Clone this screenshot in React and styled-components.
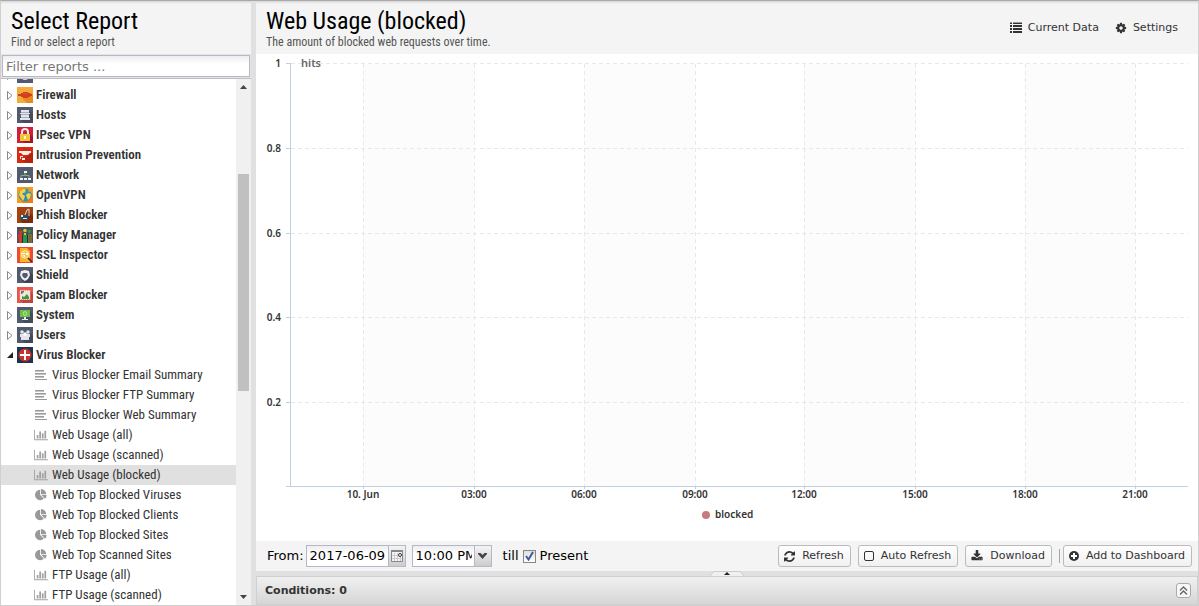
import React, { useLayoutEffect, useRef, useState } from 'react';
import styled, { createGlobalStyle } from 'styled-components';

const condensed = '"Roboto Condensed", Roboto, sans-serif';
const sans = '"DejaVu Sans", Verdana, sans-serif';

const apps = [
  { id: 'events', label: 'Events' },
  { id: 'firewall', label: 'Firewall' },
  { id: 'hosts', label: 'Hosts' },
  { id: 'ipsec', label: 'IPsec VPN' },
  { id: 'intrusion', label: 'Intrusion Prevention' },
  { id: 'network', label: 'Network' },
  { id: 'openvpn', label: 'OpenVPN' },
  { id: 'phish', label: 'Phish Blocker' },
  { id: 'policy', label: 'Policy Manager' },
  { id: 'ssl', label: 'SSL Inspector' },
  { id: 'shield', label: 'Shield' },
  { id: 'spam', label: 'Spam Blocker' },
  { id: 'system', label: 'System' },
  { id: 'users', label: 'Users' },
  {
    id: 'virus',
    label: 'Virus Blocker',
    reports: [
      { type: 'text', label: 'Virus Blocker Email Summary' },
      { type: 'text', label: 'Virus Blocker FTP Summary' },
      { type: 'text', label: 'Virus Blocker Web Summary' },
      { type: 'bar', label: 'Web Usage (all)' },
      { type: 'bar', label: 'Web Usage (scanned)' },
      { type: 'bar', label: 'Web Usage (blocked)' },
      { type: 'pie', label: 'Web Top Blocked Viruses' },
      { type: 'pie', label: 'Web Top Blocked Clients' },
      { type: 'pie', label: 'Web Top Blocked Sites' },
      { type: 'pie', label: 'Web Top Scanned Sites' },
      { type: 'bar', label: 'FTP Usage (all)' },
      { type: 'bar', label: 'FTP Usage (scanned)' },
    ],
  },
];

const slate = '#525a6e';

const appIcons = {
  events: (
    <>
      <path fill={slate} d="M0 0h16v16H0z" />
      <circle cx="8" cy="8" r="5" fill="#dfe2e8" />
    </>
  ),
  firewall: (
    <>
      <path fill="#f3ab3b" d="M0 0h16v16H0z" />
      <path fill="#e88a22" d="M5 11l8-6 3 3v8H10z" />
      <path fill="#d0401f" d="M1 7h3V6h2V5h5v1h2v1h2v2h-2v1h-2v1H6v-1H4V9H1z" />
      <path fill="#e0562c" d="M6 6h4v1H6z" />
    </>
  ),
  hosts: (
    <>
      <path fill={slate} d="M0 0h16v16H0z" />
      <path fill="#444b5c" d="M13 4l3 3v9H7l-3-3z" />
      <path fill="#aab0bb" d="M4 3h8v10H4z" />
      <path fill="#e2e5ea" d="M4 3h8v2H4zM3 6h10v1H3zM4 8h8v2H4zM3 11h10v2H3z" />
    </>
  ),
  ipsec: (
    <>
      <path fill="#cf1f3c" d="M0 0h16v16H0z" />
      <path fill="#a2152c" d="M12 6l4 4v6H8l-4-3z" />
      <path fill="none" stroke="#f3e9e4" strokeWidth="2" d="M5 8V5a3 3 0 0 1 6 0v3" />
      <path fill="#f0c63c" d="M3 7h10v7H3z" />
      <path fill="#fff3c4" d="M7 9h2v3H7z" />
    </>
  ),
  intrusion: (
    <>
      <path fill="#d92a10" d="M0 0h16v16H0z" />
      <path fill="#b8230d" d="M14 5l2 2v9H9l-4-3z" />
      <path fill="#f4ecea" d="M2 4h12v2H2zM4 6h9l-2 2H6zM3 9h3v1H3zM3 10h1v2H3zM5 11h3v2H5z" />
    </>
  ),
  network: (
    <>
      <path fill={slate} d="M0 0h16v16H0z" />
      <path fill="none" stroke="#7fae84" d="M8 5v4M4 11V8.500h8V11" />
      <path fill="#f1f3f5" d="M7 4h3v2H7zM3 11h3v2H3zM7 11h3v2H7zM11 11h3v2h-3z" />
    </>
  ),
  openvpn: (
    <>
      <path fill="#f79a1d" d="M0 0h16v16H0z" />
      <path fill="#ef7d13" d="M12 4l4 4v8H6l-2-3z" />
      <circle cx="8" cy="8" r="6.500" fill="#3590b8" />
      <path fill="#f8d23c" d="M3 4l3-2 3 0-1 2 1 1-3 1-1 1 3 2-1 3-1 2-2-3-2-3zM9 8l2-2 3 1-1 4-2 2-1-3zM11 3l2 1-1 1z" />
    </>
  ),
  phish: (
    <>
      <path fill="#a5400f" d="M0 0h16v16H0z" />
      <path fill="#7c2c08" d="M12 5l4 4v7H6l-3-3z" />
      <path fill="#2d4c6b" d="M3 8h8v5H4z" />
      <path fill="#e9edf1" d="M4 8h2v2H4zM6 11h4v1H6z" />
      <path fill="none" stroke="#d5dbe2" d="M8 8l2-5 2-1v7" />
    </>
  ),
  policy: (
    <>
      <path fill="#4a4f5c" d="M0 0h16v16H0z" />
      <circle cx="3.500" cy="5" r="1.800" fill="#d23a2b" />
      <circle cx="8" cy="3.500" r="1.800" fill="#e7c32f" />
      <circle cx="12.500" cy="4.500" r="1.800" fill="#24984b" />
      <path fill="#d23a2b" d="M1 7h4v9H2z" />
      <path fill="#e7c32f" d="M7 6h2v3H7z" />
      <path fill="#1f9a4a" d="M6 8h4v8H6zM11 7h1v9h-1zM14 7h1v9h-1z" />
      <path fill="#d23a2b" d="M12 7h2v9h-2z" />
      <path fill="#2b2f38" d="M5 8h1v8H5zM10 8h1v8h-1z" />
    </>
  ),
  ssl: (
    <>
      <path fill="#ee4b32" d="M0 0h16v16H0z" />
      <path fill="#f5b32e" d="M3 1h7l3 3v11H3z" />
      <circle cx="8" cy="7.500" r="3.800" fill="#f7c55a" stroke="#fbe7a6" />
      <path fill="#fff" d="M5 6h3v1H6v1h2v2H7zM9 6h2v2H9z" />
      <path stroke="#4a2b22" strokeWidth="1.600" d="M11 11l4 4" />
    </>
  ),
  shield: (
    <>
      <path fill={slate} d="M0 0h16v16H0z" />
      <path fill="#3e4454" d="M12 4l4 4v8H8l-3-3z" />
      <path fill="#eef0f4" d="M8 3l4 1 1 4-2 4-3 2-3-2-2-4 1-4z" />
      <path fill={slate} d="M6 6h4l1 2-1 2-2 1.500L6 10 5 8z" />
    </>
  ),
  spam: (
    <>
      <path fill="#e4574d" d="M0 0h16v16H0z" />
      <path fill="#c2443b" d="M13 4l3 3v9H6l-3-3z" />
      <path fill="#efe6df" stroke="#f7c9c3" strokeDasharray="1 1" d="M3 3.500h10v9H3z" />
      <path fill="#3c9a3b" d="M5 12V9l2 1 3-3 2 3v2z" />
      <path fill="#8f6a5c" d="M4 4h3v1L5 7H4z" />
    </>
  ),
  system: (
    <>
      <path fill={slate} d="M0 0h16v16H0z" />
      <path fill="#444b5c" d="M13 4l3 3v9H8l-3-3z" />
      <path fill="#6cc04a" d="M3 3h10v7H3z" />
      <circle cx="8" cy="6.500" r="1.800" fill="none" stroke="#b9e6a4" />
      <path fill="#e7eaee" d="M7 10h2v2h2v1H5v-1h2z" />
    </>
  ),
  users: (
    <>
      <path fill={slate} d="M0 0h16v16H0z" />
      <path fill="#424959" d="M13 6l3 3v7H8l-4-4z" />
      <circle cx="5" cy="5" r="1.800" fill="#e3e6eb" />
      <circle cx="11" cy="5" r="1.800" fill="#e3e6eb" />
      <path fill="#e3e6eb" d="M3 7h10v3h-1v3H4v-3H3z" />
      <circle cx="8" cy="7" r="1.800" fill="#fff" />
    </>
  ),
  virus: (
    <>
      <path fill="#1e3252" d="M0 0h16v16H0z" />
      <circle cx="8" cy="8" r="6.500" fill="#c8342a" />
      <path fill="#fff" d="M7 3h2v4h4v2H9v4H7V9H3V7h4z" />
    </>
  ),
};

const reportIcons = {
  text: (
    <svg width="12" height="12" viewBox="0 0 12 12" shapeRendering="crispEdges" aria-hidden="true">
      <path fill="#999" d="M0 1h9v1H0zM0 4h11v1H0zM0 7h9v1H0zM0 10h12v1H0z" />
      <path fill="#c4c4c4" d="M0 2h9v1H0zM0 5h11v1H0zM0 8h9v1H0z" />
    </svg>
  ),
  bar: (
    <svg width="14" height="12" viewBox="0 0 2048 1792" fill="#a0a0a0" aria-hidden="true">
      <path d="M640 896v512h-256v-512h256zm384-512v1024h-256v-1024h256zm1024 1152v128h-2048v-1536h128v1408h1920zm-640-896v768h-256v-768h256zm384-384v1152h-256v-1152h256z" />
    </svg>
  ),
  pie: (
    <svg width="12" height="12" viewBox="0 0 1792 1792" fill="#999" aria-hidden="true">
      <path d="M768 890l546 546q-106 108-247.500 168t-298.500 60q-209 0-385.500-103t-279.500-279.500-103-385.500 103-385.500 279.500-279.500 385.500-103v762zm187 6h773q0 157-60 298.500t-168 247.500zm709-128h-768v-768q209 0 385.500 103t279.500 279.500 103 385.500z" />
    </svg>
  ),
};

const ListIcon = () => (
  <svg width="12" height="11" viewBox="0 0 12 11" fill="#333" shapeRendering="crispEdges" aria-hidden="true">
    <path d="M0 1h2v1H0zM3 1h9v1H3zM0 3h2v2H0zM3 3h9v2H3zM0 6h2v2H0zM3 6h9v2H3zM0 9h2v2H0zM3 9h9v2H3z" />
    <path fill="#999" d="M0 0h2v1H0zM3 0h9v1H3z" />
  </svg>
);

const CogIcon = () => (
  <svg width="12" height="12" viewBox="0 0 1792 1792" fill="#333" aria-hidden="true">
    <path d="M1152 896q0-106-75-181t-181-75-181 75-75 181 75 181 181 75 181-75 75-181zm512-109v222q0 12-8 23t-20 13l-185 28q-19 54-39 91 35 50 107 138 10 12 10 25t-9 23q-27 37-99 108t-94 71q-12 0-26-9l-138-108q-44 23-91 38-16 136-29 186-7 28-36 28h-222q-14 0-24.500-8.500t-11.500-21.500l-28-184q-49-16-90-37l-141 107q-10 9-25 9-14 0-25-11-126-114-165-168-7-10-7-23 0-12 8-23 15-21 51-66.500t54-70.500q-27-50-41-99l-183-27q-13-2-21-12.500t-8-23.500v-222q0-12 8-23t19-13l186-28q14-46 39-92-40-57-107-138-10-12-10-24 0-10 9-23 26-36 98.500-107.500t94.500-71.500q13 0 26 10l138 107q44-23 91-38 16-136 29-186 7-28 36-28h222q14 0 24.500 8.500t11.500 21.500l28 184q49 16 90 37l142-107q9-9 24-9 13 0 25 10 129 119 165 170 7 8 7 22 0 12-8 23-15 21-51 66.500t-54 70.500q26 50 41 98l183 28q13 2 21 12.500t8 23.500z" />
  </svg>
);

const RefreshIcon = () => (
  <svg width="11" height="11" viewBox="0 0 1536 1536" fill="#333" aria-hidden="true">
    <path d="M1511 928q0 5-1 7-64 268-268 434.500t-478 166.500q-146 0-282.500-55t-243.500-157l-129 129q-19 19-45 19t-45-19-19-45v-448q0-26 19-45t45-19h448q26 0 45 19t19 45-19 45l-137 137q71 66 161 102t187 36q134 0 250-65t186-179q11-17 53-117 8-23 30-23h192q13 0 22.500 9.500t9.500 22.500zm25-800v448q0 26-19 45t-45 19h-448q-26 0-45-19t-19-45 19-45l138-138q-148-137-349-137-134 0-250 65t-186 179q-11 17-53 117-8 23-30 23h-199q-13 0-22.500-9.500t-9.500-22.500v-7q65-268 270-434.500t480-166.500q146 0 284 55.500t245 156.500l130-129q19-19 45-19t45 19 19 45z" />
  </svg>
);

const SquareIcon = () => (
  <svg width="10" height="10" viewBox="0 0 10 10" fill="none" stroke="#333" aria-hidden="true">
    <rect x="0.500" y="0.500" width="9" height="9" rx="1.500" />
  </svg>
);

const DownloadIcon = () => (
  <svg width="12" height="12" viewBox="0 0 1792 1792" fill="#333" aria-hidden="true">
    <path d="M1344 1344q0-26-19-45t-45-19-45 19-19 45 19 45 45 19 45-19 19-45zm256 0q0-26-19-45t-45-19-45 19-19 45 19 45 45 19 45-19 19-45zm128-224v320q0 40-28 68t-68 28h-1472q-40 0-68-28t-28-68v-320q0-40 28-68t68-28h465l135 136q58 56 136 56t136-56l136-136h464q40 0 68 28t28 68zm-325-569q17 41-14 70l-448 448q-18 19-45 19t-45-19l-448-448q-31-29-14-70 17-39 59-39h256v-448q0-26 19-45t45-19h256q26 0 45 19t19 45v448h256q42 0 59 39z" />
  </svg>
);

const PlusIcon = () => (
  <svg width="10" height="10" viewBox="0 0 10 10" aria-hidden="true">
    <circle cx="5" cy="5" r="5" fill="#333" />
    <path fill="#fff" d="M4 2h2v2h2v2H6v2H4V6H2V4h2z" />
  </svg>
);

const gridX = [
  { x: 107, label: '10. Jun' },
  { x: 218, label: '03:00' },
  { x: 328, label: '06:00' },
  { x: 439, label: '09:00' },
  { x: 548, label: '12:00' },
  { x: 659, label: '15:00' },
  { x: 769, label: '18:00' },
  { x: 879, label: '21:00' },
];
const gridY = [
  { y: 9, label: '1' },
  { y: 94, label: '0.8' },
  { y: 179, label: '0.6' },
  { y: 263, label: '0.4' },
  { y: 348, label: '0.2' },
];

function UsageChart() {
  return (
    <Chart viewBox="0 0 942 487" role="img" aria-label="Web Usage (blocked)">
      {[0, 2, 4, 6].map((i) => (
        <rect key={i} x={gridX[i].x} y="10" width={gridX[i + 1].x - gridX[i].x} height="422" fill="#fcfcfc" />
      ))}
      <g stroke="#e8e8e8" strokeDasharray="4 3" shapeRendering="crispEdges">
        {gridX.map(({ x }) => <path key={x} d={`M${x + 0.5} 10V432`} />)}
        {gridY.map(({ y }) => <path key={y} d={`M35 ${y + 0.5}H932`} />)}
      </g>
      <g stroke="#c0d0e0" shapeRendering="crispEdges">
        <path d="M34.500 9V433M30 432.500H932" />
        {gridX.map(({ x }) => <path key={x} d={`M${x + 0.5} 432V435`} />)}
        {gridY.map(({ y }) => <path key={y} d={`M30 ${y + 0.5}H34`} />)}
      </g>
      <ChartText x="45" y="13" $title>hits</ChartText>
      {gridX.map(({ x, label }) => (
        <ChartText key={x} x={x} y="444" textAnchor="middle">{label}</ChartText>
      ))}
      {gridY.map(({ y, label }) => (
        <ChartText key={y} x="25" y={y + 4} textAnchor="end">{label}</ChartText>
      ))}
      <circle cx="450" cy="461" r="4" fill="#c77b7d" />
      <ChartText x="459" y="464">blocked</ChartText>
    </Chart>
  );
}

export default function App() {
  const [selected, setSelected] = useState('Web Usage (blocked)');
  const list = useRef(null);

  useLayoutEffect(() => {
    list.current.scrollTop = 14;
  }, []);

  return (
    <Page>
      <GlobalStyle />
      <Sidebar>
        <Header>
          <div>
            <Title>Select Report</Title>
            <Subtitle>Find or select a report</Subtitle>
          </div>
        </Header>
        <Filter>
          <FilterInput type="text" placeholder="Filter reports ..." aria-label="Filter reports" />
        </Filter>
        <Tree>
          <TreeList ref={list}>
            {apps.map((app) => (
              <li key={app.id}>
                <AppRow href={`#${app.id}`}>
                  <Expander width="7" height="9" viewBox="0 0 7 9" aria-hidden="true">
                    {app.reports
                      ? <path fill="#222" d="M6 1v6H0z" />
                      : <path fill="#fff" stroke="#888" d="M0.500 0.500v8L5 4.500z" />}
                  </Expander>
                  <AppIcon width="16" height="16" viewBox="0 0 16 16" aria-hidden="true">
                    {appIcons[app.id]}
                  </AppIcon>
                  {app.label}
                </AppRow>
                {app.reports && (
                  <ul>
                    {app.reports.map((report) => (
                      <li key={report.label}>
                        <ReportRow
                          href="#report"
                          $selected={report.label === selected}
                          onClick={() => setSelected(report.label)}
                        >
                          <ReportIcon>{reportIcons[report.type]}</ReportIcon>
                          {report.label}
                        </ReportRow>
                      </li>
                    ))}
                  </ul>
                )}
              </li>
            ))}
          </TreeList>
          <Scrollbar>
            <svg width="7" height="4" viewBox="0 0 7 4" aria-hidden="true"><path fill="#444" d="M0 4l3.500-4L7 4z" /></svg>
            <Track><Thumb /></Track>
            <svg width="7" height="4" viewBox="0 0 7 4" aria-hidden="true"><path fill="#444" d="M0 0l3.500 4L7 0z" /></svg>
          </Scrollbar>
        </Tree>
      </Sidebar>
      <Main>
        <Header>
          <div>
            <Title>Web Usage (blocked)</Title>
            <Subtitle>The amount of blocked web requests over time.</Subtitle>
          </div>
          <HeaderActions>
            <LinkButton type="button"><ListIcon />Current Data</LinkButton>
            <LinkButton type="button"><CogIcon />Settings</LinkButton>
          </HeaderActions>
        </Header>
        <ChartPanel>
          <UsageChart />
        </ChartPanel>
        <Toolbar>
          <Range>
            <FromField>
              <label htmlFor="from-date">From:</label>
              <DateField>
                <DateInput id="from-date" type="text" defaultValue="2017-06-09" />
                <Trigger type="button" aria-label="Pick a date">
                  <svg width="12" height="12" viewBox="0 0 12 12" aria-hidden="true">
                    <path fill="#f4f4f4" stroke="#888" d="M0.500 0.500h11v11H0.500z" />
                    <path fill="#888" d="M0 0h12v2H0z" />
                    <path stroke="#ccc" d="M1 5.500h10M1 8.500h10M3.500 3v8M6.500 3v8M9.500 3v8" />
                    <circle cx="9" cy="5" r="1.500" fill="#fff" stroke="#333" />
                  </svg>
                </Trigger>
              </DateField>
            </FromField>
            <TimeField>
              <TimeSelect aria-label="From time" defaultValue="10:00 PM">
                <option>9:00 PM</option>
                <option>10:00 PM</option>
                <option>11:00 PM</option>
              </TimeSelect>
              <TimeArrow>
                <svg width="9" height="6" viewBox="0 0 9 6" aria-hidden="true">
                  <path fill="#444" d="M0 0h2.500l2 2 2-2H9v1L4.500 6 0 1z" />
                </svg>
              </TimeArrow>
            </TimeField>
            <Present>
              till
              <Check>
                <input type="checkbox" defaultChecked />
                <svg width="9" height="10" viewBox="0 0 9 10" aria-hidden="true">
                  <path fill="none" stroke="#3f5ba0" strokeWidth="2" d="M1 5l2.500 3.500L8 1" />
                </svg>
              </Check>
              Present
            </Present>
          </Range>
          <Button type="button"><RefreshIcon />Refresh</Button>
          <Button type="button"><SquareIcon />Auto Refresh</Button>
          <Button type="button"><DownloadIcon />Download</Button>
          <AddGroup>
            <Button type="button"><PlusIcon />Add to Dashboard</Button>
          </AddGroup>
        </Toolbar>
        <Splitter>
          <svg width="34" height="5" viewBox="0 0 34 5" aria-hidden="true">
            <path fill="#f0f0f0" stroke="#ccc" d="M0 5L4 0.500h26L34 5" />
            <path fill="#222" d="M14 4l3-3 3 3z" />
          </svg>
        </Splitter>
        <Conditions>
          <h2>Conditions: 0</h2>
          <ToolButton type="button" aria-label="Expand conditions">
            <svg width="9" height="9" viewBox="0 0 9 9" aria-hidden="true">
              <path fill="none" stroke="#666" strokeWidth="1.400" d="M1 4.500L4.500 1 8 4.500M1 8.500L4.500 5 8 8.500" />
            </svg>
          </ToolButton>
        </Conditions>
      </Main>
    </Page>
  );
}

const GlobalStyle = createGlobalStyle`
* {
  box-sizing: border-box;
}
body {
  margin: 0;
  background: #e0e0e0;
}
h1, h2, p, ul {
  margin: 0;
  padding: 0;
}
ul {
  list-style: none;
}
`;

const Page = styled.div`
  display: flex;
  gap: 5px;
  height: 100vh;
  border: 1px solid #d0d0d0;
  border-top-color: #a8a8a8;
  background: #e0e0e0;
  color: #333;
  font-family: ${sans};
`;

const Sidebar = styled.aside`
  display: flex;
  flex-direction: column;
  flex: 0 0 250px;
  min-height: 0;
`;

const Main = styled.main`
  display: flex;
  flex-direction: column;
  flex: 1;
  min-width: 0;
`;

const Header = styled.header`
  display: flex;
  justify-content: space-between;
  align-items: center;
  height: 53px;
  padding: 0 20px 0 10px;
  background: linear-gradient(#d8d8d8, #f4f4f4 3px);
  flex-shrink: 0;
`;

const Title = styled.h1`
  color: #000;
  font: 400 24px/28px ${condensed};
`;

const Subtitle = styled.p`
  color: #555;
  font: 400 12px/14px ${condensed};
`;

const HeaderActions = styled.div`
  display: flex;
  gap: 16px;
`;

const LinkButton = styled.button`
  display: flex;
  align-items: center;
  gap: 6px;
  padding: 0;
  border: 0;
  background: none;
  color: #333;
  font: 11px/14px ${sans};
`;

const Filter = styled.div`
  display: flex;
  padding: 1px;
  border-bottom: 1px solid #c0c0c0;
  background: #e4e4e4;
`;

const FilterInput = styled.input`
  flex: 1;
  min-width: 0;
  height: 22px;
  padding: 0 3px;
  border: 1px solid #b5b8c8;
  background: linear-gradient(#eee, #fff 8px);
  color: #000;
  font: 13px/18px ${sans};
  &::placeholder {
    color: #777;
  }
`;

const Tree = styled.div`
  display: flex;
  flex: 1;
  min-height: 0;
  background: #fff;
`;

const TreeList = styled.ul`
  flex: 1;
  overflow: hidden;
`;

const AppRow = styled.a`
  display: flex;
  align-items: center;
  height: 20px;
  padding-left: 6px;
  color: #333;
  font: 600 13px/20px ${condensed};
  text-decoration: none;
`;

const Expander = styled.svg`
  margin-right: 3px;
`;

const AppIcon = styled.svg`
  margin-right: 3px;
`;

const ReportRow = styled.a`
  display: flex;
  align-items: center;
  height: 20px;
  padding-left: 33px;
  background: ${(props) => (props.$selected ? '#e0e0e0' : 'transparent')};
  color: #333;
  font: 400 13px/20px ${condensed};
  text-decoration: none;
`;

const ReportIcon = styled.span`
  display: flex;
  justify-content: center;
  width: 14px;
  margin-right: 4px;
`;

const Scrollbar = styled.div`
  display: flex;
  flex-direction: column;
  align-items: center;
  width: 15px;
  padding: 6px 0;
  background: #f0f0f0;
`;

const Track = styled.div`
  display: flex;
  flex-direction: column;
  flex: 1;
  margin: 6px 0;
  &::before {
    content: '';
    flex: 79;
  }
  &::after {
    content: '';
    flex: 198;
  }
`;

const Thumb = styled.div`
  flex: 217;
  width: 11px;
  background: #c0c0c0;
`;

const ChartPanel = styled.section`
  flex: 1;
  min-height: 0;
  background: #fff;
`;

const Chart = styled.svg`
  display: block;
  width: 100%;
  height: 100%;
`;

const ChartText = styled.text`
  fill: ${(props) => (props.$title ? '#666' : '#333')};
  font: 600 ${(props) => (props.$title ? '11px' : '10px')} "Noto Sans", "Open Sans", sans-serif;
`;

const Toolbar = styled.div`
  display: flex;
  align-items: center;
  gap: 7px;
  height: 30px;
  padding: 0 6px 0 11px;
  background: #f4f4f4;
`;

const Range = styled.div`
  display: flex;
  align-items: center;
  gap: 6px;
  margin-right: auto;
  color: #000;
  font: 13px/20px ${sans};
  white-space: nowrap;
`;

const FromField = styled.div`
  display: flex;
  align-items: center;
  gap: 2px;
`;

const DateField = styled.div`
  display: flex;
  height: 22px;
  border: 1px solid #b5b8c8;
`;

const DateInput = styled.input`
  width: 81px;
  padding: 0 3px;
  border: 0;
  background: linear-gradient(#eee, #fff 8px);
  color: #000;
  font: 13px/18px ${sans};
`;

const Trigger = styled.button`
  display: grid;
  place-items: center;
  width: 17px;
  padding: 0;
  border: 0;
  border-left: 1px solid #b5b8c8;
  background: linear-gradient(#f4f4f4, #ccc);
`;

const TimeField = styled.div`
  display: flex;
  width: 80px;
  height: 22px;
  border: 1px solid #b5b8c8;
`;

const TimeSelect = styled.select`
  appearance: none;
  width: 61px;
  padding: 0 2px 0 3px;
  border: 0;
  border-radius: 0;
  background: linear-gradient(#eee, #fff 8px);
  color: #000;
  font: 13px/18px ${sans};
  text-overflow: clip;
`;

const TimeArrow = styled.span`
  display: grid;
  place-items: center;
  flex: 1;
  border-left: 1px solid #b5b8c8;
  background: linear-gradient(#f4f4f4, #ccc);
  pointer-events: none;
`;

const Present = styled.label`
  display: flex;
  align-items: center;
  gap: 4px;
  margin-left: 5px;
`;

const Check = styled.span`
  display: grid;
  place-items: center;
  > * {
    grid-area: 1 / 1;
  }
  input {
    appearance: none;
    width: 13px;
    height: 13px;
    margin: 0;
    border: 1px solid #888;
    background: linear-gradient(#ddd, #fff);
  }
  svg {
    pointer-events: none;
  }
`;

const Button = styled.button`
  display: flex;
  align-items: center;
  gap: 7px;
  height: 22px;
  padding: 0 6px 0 5px;
  border: 1px solid #bbb;
  border-radius: 3px;
  background: linear-gradient(#fff, #f0f0f0);
  color: #333;
  font: 11px/14px ${sans};
  white-space: nowrap;
`;

const AddGroup = styled.div`
  display: flex;
  align-items: center;
  gap: 3px;
  &::before {
    content: '';
    width: 1px;
    height: 14px;
    background: #aca899;
  }
`;

const Splitter = styled.div`
  display: flex;
  justify-content: center;
  height: 5px;
  background: #e0e0e0;
`;

const Conditions = styled.section`
  display: flex;
  justify-content: space-between;
  align-items: center;
  height: 29px;
  padding: 0 6px 0 8px;
  border: 1px solid #d0d0d0;
  background: linear-gradient(#f0f0f0, #d6d6d6);
  h2 {
    font: bold 11px/14px ${sans};
  }
`;

const ToolButton = styled.button`
  display: grid;
  place-items: center;
  width: 15px;
  height: 15px;
  padding: 0;
  border: 1px solid #aaa;
  border-radius: 3px;
  background: #f8f8f8;
`;
